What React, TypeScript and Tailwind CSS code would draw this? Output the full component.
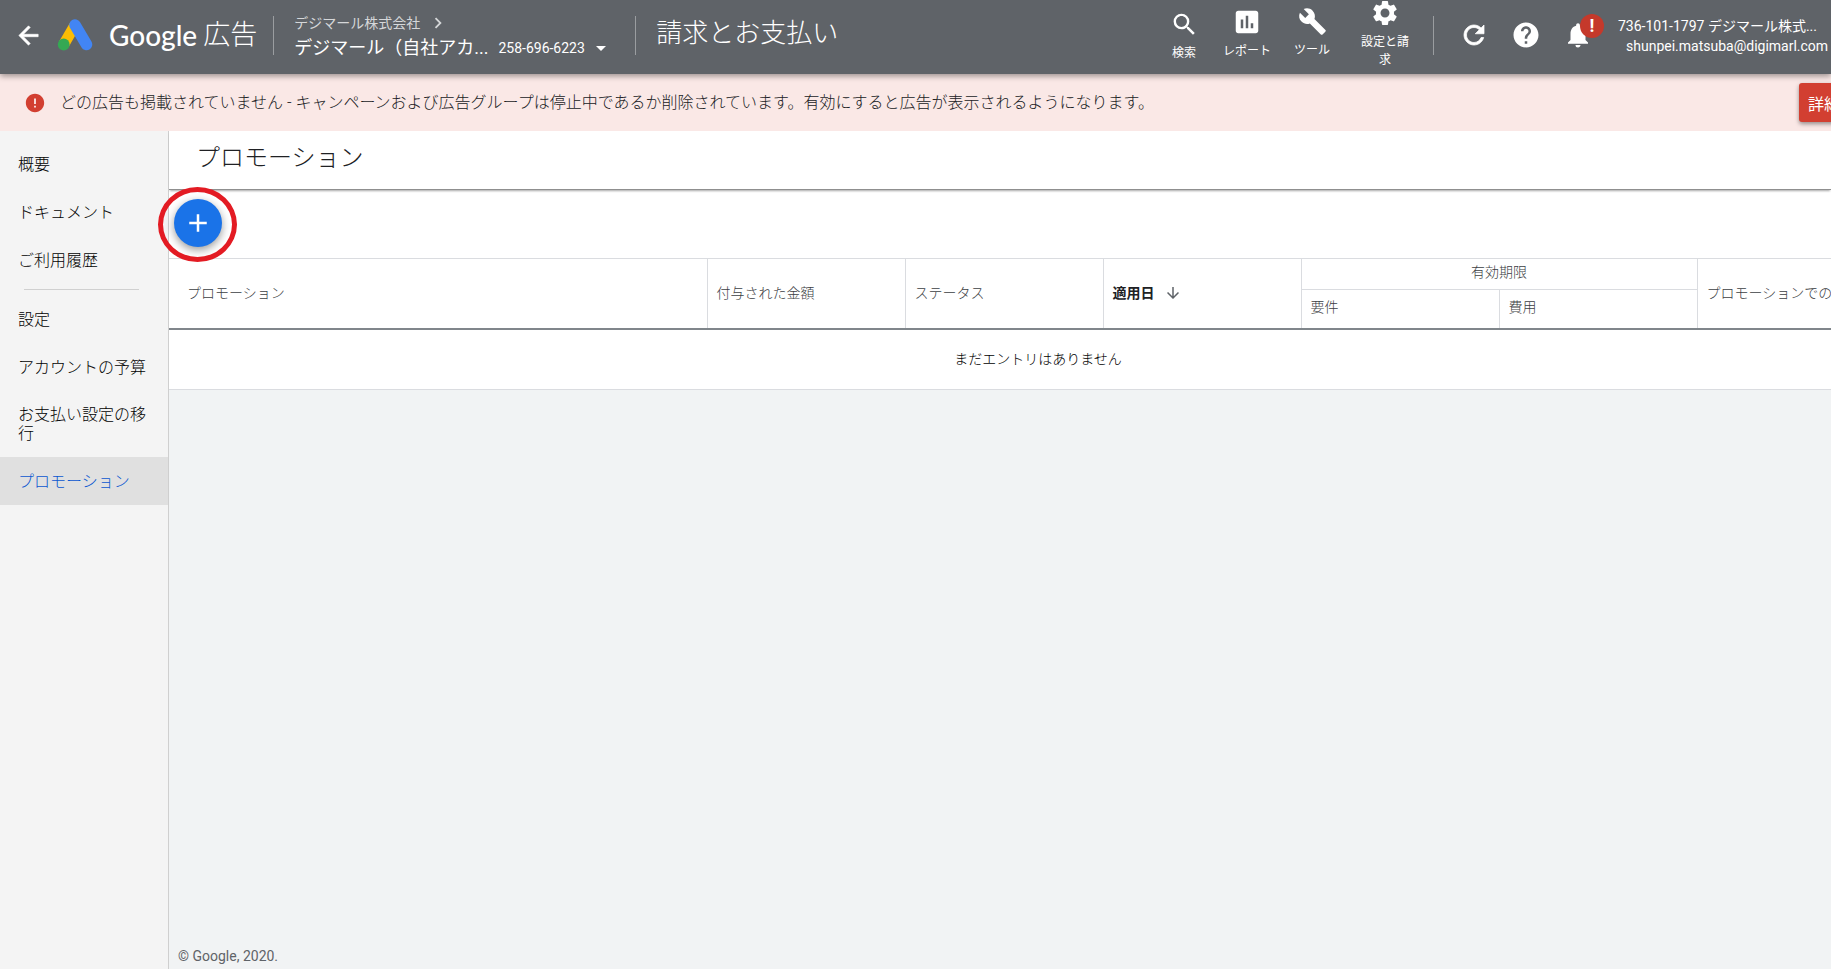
import type { ReactNode } from "react";
import {
  MdAdd,
  MdArrowDownward,
  MdArrowDropDown,
  MdAssessment,
  MdBuild,
  MdChevronRight,
  MdError,
  MdHelp,
  MdNotifications,
  MdSearch,
  MdSettings,
} from "react-icons/md";

function AdsLogo() {
  return (
    <svg width="36" height="34" viewBox="0 0 36 34" aria-hidden="true">
      <path d="M18 7 L7 26" stroke="#fbbc04" strokeWidth="11" />
      <path d="M18 7 L29.500 26.500" stroke="#4285f4" strokeWidth="11.500" strokeLinecap="round" />
      <circle cx="6.700" cy="26.500" r="5.900" fill="#34a853" />
    </svg>
  );
}

function BackIcon() {
  return (
    <svg width="29" height="29" viewBox="0 0 24 24" fill="currentColor" stroke="currentColor" strokeWidth="0.500" aria-hidden="true">
      <path d="M20 11H7.830l5.590-5.590L12 4l-8 8 8 8 1.410-1.410L7.830 13H20v-2z" />
    </svg>
  );
}

function RefreshIcon() {
  return (
    <svg width="30" height="30" viewBox="0 0 24 24" fill="currentColor" stroke="currentColor" strokeWidth="0.600" aria-hidden="true">
      <path d="M17.650 6.350C16.200 4.900 14.210 4 12 4c-4.420 0-7.990 3.580-7.990 8s3.570 8 7.990 8c3.730 0 6.840-2.550 7.730-6h-2.080c-.820 2.330-3.040 4-5.650 4-3.310 0-6-2.690-6-6s2.690-6 6-6c1.660 0 3.140.690 4.220 1.780L13 11h7V4l-2.350 2.350z" />
    </svg>
  );
}

function Divider() {
  return <div className="h-[39px] w-px shrink-0 bg-[#9a9da0]" />;
}

function Tool({ icon, label, className }: { icon: ReactNode; label: string; className: string }) {
  return (
    <button type="button" className={`flex shrink-0 flex-col items-center gap-[5px] ${className}`}>
      {icon}
      <span className="max-w-[50px] text-center text-xs leading-[18px]">{label}</span>
    </button>
  );
}

function Header() {
  return (
    <header className="relative z-20 flex h-[74px] items-start justify-between overflow-hidden bg-[#5f6368] text-white shadow-[0_2px_6px_rgba(0,0,0,0.4)]">
      <div className="flex h-[70px] shrink-0 items-center">
        <button type="button" aria-label="戻る" className="ml-[14px]">
          <BackIcon />
        </button>
        <a href="#" className="ml-[14px] flex items-center">
          <AdsLogo />
          <span className="ml-4 font-[Lato,'Noto_Sans_CJK_JP',sans-serif] text-[28px] font-medium leading-9">Google</span>
          <span className="ml-[6px] text-[27px] font-light leading-9">広告</span>
        </a>
        <div className="ml-4 flex items-center">
          <Divider />
        </div>
        <div className="ml-5 flex w-[325px] flex-col gap-[2px] pt-[2px]">
          <a href="#" className="flex items-center text-sm leading-[22px] text-[#d5d7d9]">
            デジマール株式会社
            <MdChevronRight size={22} className="ml-[7px]" />
          </a>
          <button type="button" className="flex items-center leading-6">
            <span className="shrink-0 text-lg leading-6">デジマール（自社アカ...</span>
            <span className="ml-[10px] shrink-0 text-sm leading-6">258-696-6223</span>
            <MdArrowDropDown size={32} className="h-6 w-8 shrink-0" />
          </button>
        </div>
        <div className="ml-4 flex items-center">
          <Divider />
        </div>
        <h1 className="ml-5 pb-1 text-[26px] font-light leading-9">請求とお支払い</h1>
      </div>

      <div className="flex w-[679px] shrink-0 items-start">
        <div className="flex h-[66px] items-center">
          <Tool className="w-16 pt-[6px]" icon={<MdSearch size={29} />} label="検索" />
          <Tool className="w-[62px]" icon={<MdAssessment size={30} />} label="レポート" />
          <Tool className="w-[68px]" icon={<MdBuild size={29} />} label="ツール" />
          <Tool className="w-[78px]" icon={<MdSettings size={30} />} label="設定と請求" />
        </div>
        <div className="flex h-[70px] items-center">
          <div className="ml-[9px]">
            <Divider />
          </div>
          <button type="button" aria-label="更新" className="ml-[25px]">
            <RefreshIcon />
          </button>
          <button type="button" aria-label="ヘルプ" className="ml-[22px]">
            <MdHelp size={30} />
          </button>
          <button type="button" aria-label="通知" className="relative ml-[22px]">
            <MdNotifications size={30} />
            <span className="absolute -top-[6px] left-[17px] flex size-6 items-center justify-center rounded-full bg-[#c5392b] text-lg font-bold leading-6">
              !
            </span>
          </button>
          <div className="ml-[25px] flex flex-col whitespace-nowrap pt-[2px] text-sm leading-5">
            <span>736-101-1797 デジマール株式...</span>
            <span className="pl-2">shunpei.matsuba@digimarl.com</span>
          </div>
        </div>
      </div>
    </header>
  );
}

function Banner() {
  return (
    <div className="flex h-[57px] items-center overflow-hidden bg-[#fae8e6]">
      <MdError size={22} className="ml-6 shrink-0 text-[#d23f31]" />
      <p className="ml-[14px] flex-1 whitespace-nowrap text-base font-light leading-5 text-[#202124]">
        どの広告も掲載されていません - キャンペーンおよび広告グループは停止中であるか削除されています。有効にすると広告が表示されるようになります。
      </p>
      <div className="w-8 shrink-0">
        <button
          type="button"
          className="h-[39px] whitespace-nowrap rounded-[3px] bg-[#d23f31] px-[9px] pt-1 text-base text-white shadow-[0_2px_4px_rgba(0,0,0,0.4)]"
        >
          詳細
        </button>
      </div>
    </div>
  );
}

function NavItem({ label, active = false }: { label: string; active?: boolean }) {
  return (
    <a
      href="#"
      aria-current={active ? "page" : undefined}
      className={`flex min-h-12 items-center py-[14px] pl-[18px] pr-5 text-base font-light leading-[19px] ${
        active ? "bg-[#e0e0e0] text-[#0b57d0]" : "text-black"
      }`}
    >
      {label}
    </a>
  );
}

function Sidebar() {
  return (
    <nav className="w-[168px] shrink-0 bg-[#f4f4f4] pt-[9px]">
      <NavItem label="概要" />
      <NavItem label="ドキュメント" />
      <NavItem label="ご利用履歴" />
      <hr className="my-[5px] ml-6 mr-[29px] border-t border-[#d0d0d0]" />
      <NavItem label="設定" />
      <NavItem label="アカウントの予算" />
      <NavItem label="お支払い設定の移行" />
      <NavItem label="プロモーション" active />
    </nav>
  );
}

function PromotionsTable() {
  const head = "border-l border-[#dadce0] pl-[9px] text-left font-light";
  return (
    <div className="overflow-hidden">
      <table className="w-[calc(100%+76px)] min-w-[1400px] table-fixed border-collapse bg-white text-sm leading-5 text-[#3c4043]">
        <colgroup>
          <col />
          <col className="w-[198px]" />
          <col className="w-[198px]" />
          <col className="w-[198px]" />
          <col className="w-[198px]" />
          <col className="w-[198px]" />
          <col className="w-[210px]" />
        </colgroup>
        <thead className="border-b-2 border-t border-b-[#80868b] border-t-[#dadce0]">
          <tr className="h-[31px]">
            <th rowSpan={2} className="pl-[18px] text-left font-light">プロモーション</th>
            <th rowSpan={2} className={head}>付与された金額</th>
            <th rowSpan={2} className={head}>ステータス</th>
            <th rowSpan={2} aria-sort="descending" className="border-l border-[#dadce0] pl-[9px] text-left font-bold text-[#202124]">
              <button type="button" className="flex items-center gap-[9px]">
                適用日
                <MdArrowDownward size={18} className="text-[#5f6368]" />
              </button>
            </th>
            <th colSpan={2} className="border-b border-l border-[#dadce0] pb-1 text-center font-light">有効期限</th>
            <th rowSpan={2} className={`whitespace-nowrap ${head}`}>プロモーションでの条件</th>
          </tr>
          <tr className="h-[39px]">
            <th className={`pb-1 ${head}`}>要件</th>
            <th className={`pb-1 ${head}`}>費用</th>
          </tr>
        </thead>
        <tbody>
          <tr className="h-[61px] border-b border-[#dadce0]">
            <td colSpan={7} className="text-center font-light text-black">まだエントリはありません</td>
          </tr>
        </tbody>
      </table>
    </div>
  );
}

export default function App() {
  return (
    <div className="flex min-h-screen flex-col overflow-hidden bg-[#f1f3f4] font-[Roboto,'Noto_Sans_CJK_JP',sans-serif]">
      <Header />
      <Banner />
      <div className="flex flex-1">
        <Sidebar />
        <main className="flex min-w-0 flex-1 flex-col border-l border-[#cfcfcf]">
          <div className="relative flex h-[59px] items-center border-b border-[#8f8f8f] bg-white pl-[27px] shadow-[0_2px_2px_-1px_rgba(0,0,0,0.35)]">
            <h2 className="pb-1 text-2xl font-light leading-8 text-[#202124]">プロモーション</h2>
          </div>
          <div className="h-[68px] bg-white pl-[5px] pt-[9px]">
            <div className="relative size-12">
              <button
                type="button"
                aria-label="プロモーションを追加"
                className="flex size-12 items-center justify-center rounded-full bg-[#1a73e8] text-white shadow-[0_3px_8px_rgba(0,0,0,0.4)]"
              >
                <MdAdd size={30} />
              </button>
              <span className="pointer-events-none absolute -left-4 -top-3 z-10 h-[75px] w-[79px] rounded-[50%] border-[5px] border-[#e31b23]" />
            </div>
          </div>
          <PromotionsTable />
          <footer className="mt-auto pb-[3px] pl-[9px] text-sm leading-5 text-[#5f6368]">© Google, 2020.</footer>
        </main>
      </div>
    </div>
  );
}
